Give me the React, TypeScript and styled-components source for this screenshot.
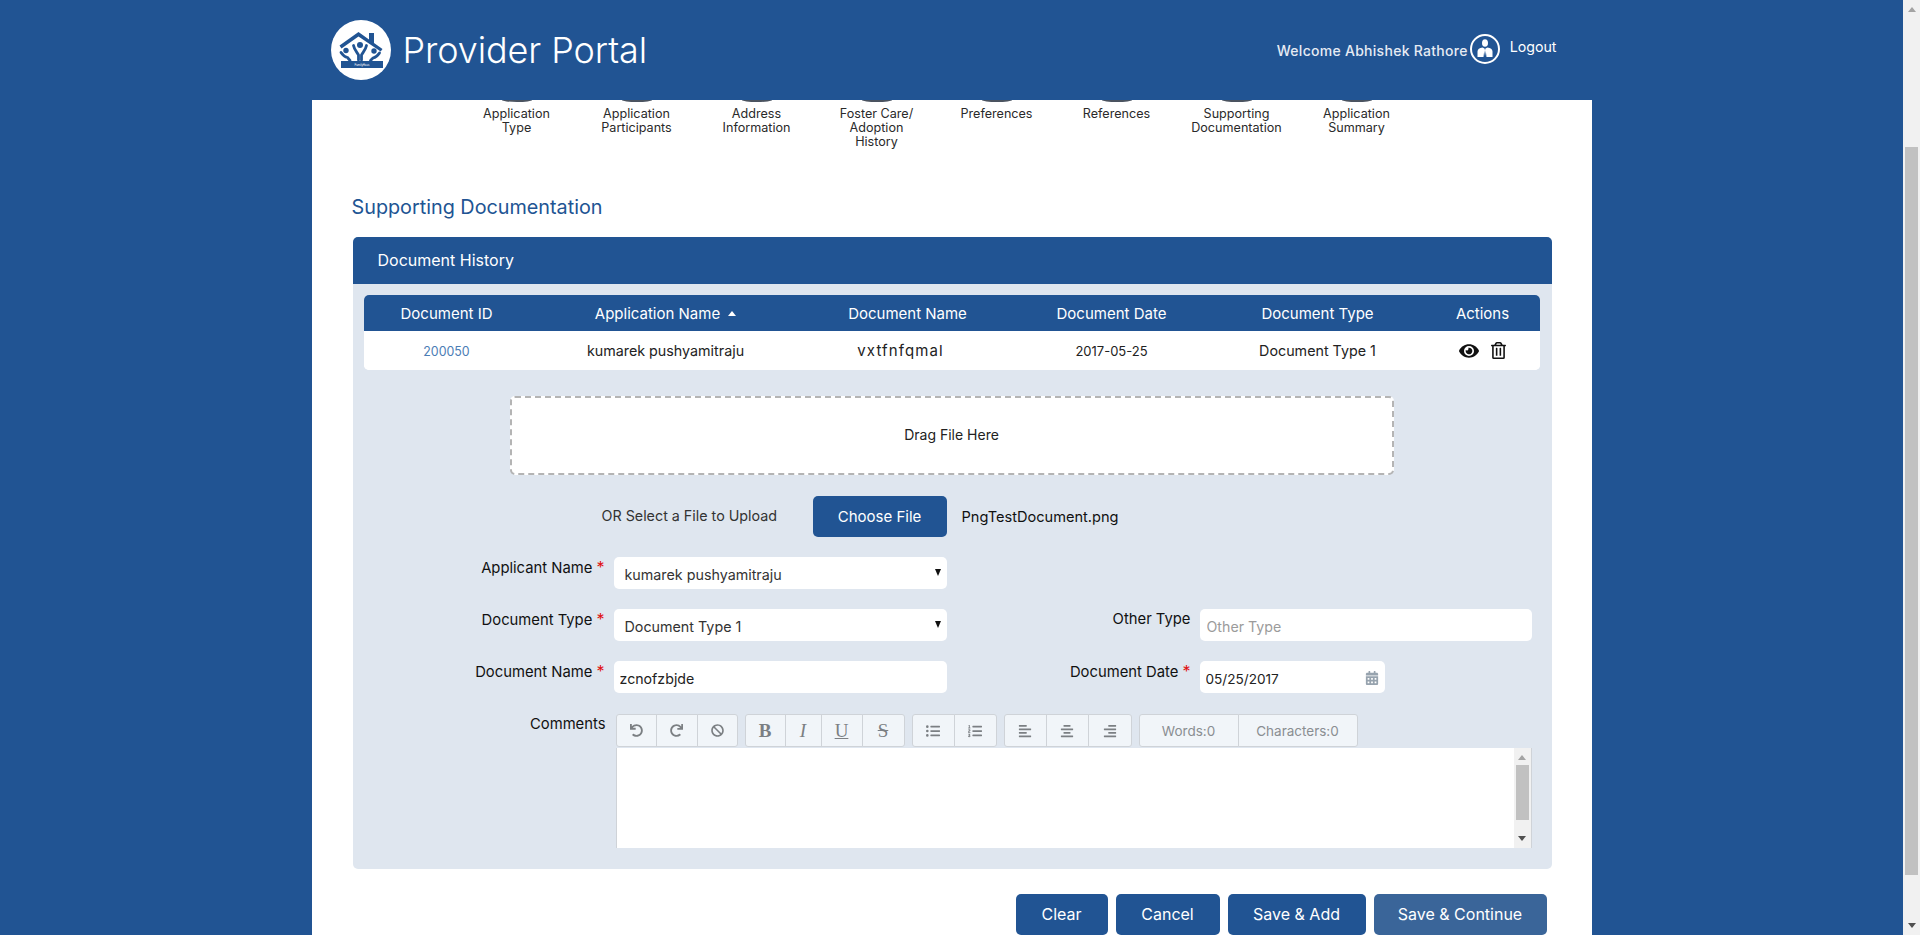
import React from "react";
import styled, { createGlobalStyle } from "styled-components";
import {
  FaAlignCenter, FaAlignLeft, FaAlignRight, FaBan, FaCalendarAlt, FaEye, FaListOl, FaListUl,
  FaRedo, FaRegTrashAlt, FaUndo,
} from "react-icons/fa";

const BLUE = "#215493";
const FONT = `Inter, "Liberation Sans", sans-serif`;

const Global = createGlobalStyle`
  html, body { margin: 0; height: 100%; overflow: hidden; background: ${BLUE}; }
  * { box-sizing: border-box; }
  body { font-family: ${FONT}; color: #222; }
`;

const Shell = styled.div`display: flex; height: 100vh;`;
const Viewport = styled.div`flex: 1; min-width: 0; display: flex; flex-direction: column; overflow: hidden;`;
const PageBar = styled.div`
  width: 17px; background: #f1f1f1; display: flex; flex-direction: column; align-items: center; flex: none;
`;
const Arrow = styled.div<{ $down?: boolean }>`
  width: 0; height: 0; flex: none;
  border-left: 4px solid transparent; border-right: 4px solid transparent;
  ${(p) => (p.$down ? "border-top: 5px solid #505050;" : "border-bottom: 5px solid #a3a3a3;")}
`;
const PageThumb = styled.div`width: 13px; height: 728px; margin-top: 135px; background: #c1c1c1; flex: none;`;
const Spacer = styled.div`flex: 1;`;
const PageArrowTop = styled(Arrow)`margin-top: 7px;`;
const PageArrowBottom = styled(Arrow)`margin-bottom: 7px;`;

const Header = styled.header`height: 100px; flex: none; background: ${BLUE}; display: flex; justify-content: center;`;
const HeaderInner = styled.div`width: 1280px; display: flex; align-items: center; padding: 0 35px 0 19px;`;
const LogoMark = styled.svg`width: 60px; height: 60px; flex: none;`;
const Title = styled.h1`
  margin: 0 0 0 12px; font-size: 36px; font-weight: 300; color: #fff; letter-spacing: -0.1px; line-height: 44px;
`;
const UserArea = styled.div`margin-left: auto; display: flex; align-items: center; color: #e6ebf3; padding-bottom: 3px;`;
const Welcome = styled.span`font-size: 14px; font-weight: 500; margin-top: 4px; letter-spacing: 0.28px;`;
const UserIcon = styled.svg`width: 32px; height: 32px; margin: 0 9px 0 1px;`;
const Logout = styled.span`font-size: 14.2px; color: #fff; margin-top: -4px;`;

const Sheet = styled.main`
  width: 1280px; flex: 1; margin: 0 auto; background: #fff; padding-left: 41px; overflow: hidden;
`;
const Steps = styled.ol`
  list-style: none; margin: 0 0 0 104px; padding: 0; display: flex; height: 95px;
`;
const Step = styled.li`
  width: 120px; display: flex; flex-direction: column; align-items: center;
  font-size: 12.6px; line-height: 14px; text-align: center; color: #2a2a2a;
`;
const StepArc = styled.span`
  width: 30px; height: 2px; margin-bottom: 5px; background: #4a5360; border-radius: 0 0 50% 50% / 0 0 100% 100%;
`;
const StepLabel = styled.span`white-space: pre-line;`;
const Heading = styled.h2`
  margin: 0 0 18px -1px; font-size: 19.8px; line-height: 24px; font-weight: 400; color: ${BLUE};
`;
const Panel = styled.section`width: 1199px; background: #dfe6ef; border-radius: 5px; height: 632px;`;
const PanelHead = styled.div`
  height: 47px; background: ${BLUE}; border-radius: 5px 5px 0 0; color: #fff;
  font-size: 16px; display: flex; align-items: center; padding: 0 0 1px 25px;
`;
const PanelBody = styled.div`padding: 11px 12px 0 11px;`;

const COLS = "166px 272px 212px 196px 216px 114px";
const Table = styled.div`width: 1176px; border-radius: 5px; overflow: hidden; background: #fff;`;
const Row = styled.div<{ $head?: boolean }>`
  display: grid; grid-template-columns: ${COLS}; align-items: center; text-align: center;
  height: ${(p) => (p.$head ? "36px" : "39px")};
  background: ${(p) => (p.$head ? BLUE : "#fff")};
  color: ${(p) => (p.$head ? "#fff" : "#222")};
  font-size: ${(p) => (p.$head ? "15px" : "14.3px")};
`;
const IdLink = styled.a`color: #4b7db5; text-decoration: none; font-size: 12.4px;`;
const TrackedCell = styled.div`font-size: 15px; letter-spacing: 1.1px; padding-right: 14px;`;
const DigitCell = styled.div`font-size: 13px;`;
const Caret = styled.span`
  display: inline-block; width: 0; height: 0; margin-left: 8px; vertical-align: 3px;
  border-left: 4.5px solid transparent; border-right: 4.5px solid transparent; border-bottom: 5px solid #fff;
`;
const Actions = styled.div`display: flex; justify-content: center; align-items: center; gap: 11px; color: #111;`;

const DropZone = styled.div`
  width: 884px; height: 79px; margin: 26px 0 21px 146px; background: #fff; border: 2px dashed #b4b4b4; border-radius: 5px;
  display: flex; align-items: center; justify-content: center; font-size: 14px; color: #222; padding-bottom: 2px;
`;
const UploadRow = styled.div`display: flex; align-items: center; height: 41px; padding-left: 238px; margin-bottom: 20px;`;
const UploadHint = styled.span`width: 211px; font-size: 14.3px; color: #333; margin-top: -2px;`;
const Button = styled.button<{ $soft?: boolean; $w?: number }>`
  height: 41px; width: ${(p) => p.$w ?? 134}px; border: 0; border-radius: 5px; font: 400 15px ${FONT};
  color: #fff; background: ${(p) => (p.$soft ? "#3a6599" : BLUE)}; padding: 0;
`;
const FooterButton = styled(Button)`font-size: 16px; padding-bottom: 1px;`;
const FileName = styled.span`margin-left: 15px; font-size: 14.6px; color: #111;`;

const FormRow = styled.div<{ $gap?: number }>`display: flex; align-items: flex-start; height: 32px; margin-bottom: ${(p) => p.$gap ?? 20}px;`;
const Label = styled.label<{ $w: number }>`
  width: ${(p) => p.$w}px; flex: none; margin-right: 9px; text-align: right; padding-top: 1px;
  font-size: 14.8px; line-height: 18px; color: #111;
`;
const Star = styled.span`color: #e01010; font-size: 16px;`;
const SelectWrap = styled.div`
  position: relative; width: 333px; height: 32px;
  &::after {
    content: ""; position: absolute; right: 6px; top: 12px; width: 0; height: 0;
    border-left: 3.5px solid transparent; border-right: 3.5px solid transparent; border-top: 7px solid #111;
  }
`;
const Select = styled.select`
  width: 100%; height: 100%; border: 0; border-radius: 5px; background: #fff; appearance: none;
  padding: 3px 0 0 11px; font: 400 14.3px ${FONT}; color: #333;
`;
const Input = styled.input<{ $w: number; $pad?: number; $size?: number }>`
  width: ${(p) => p.$w}px; height: 32px; border: 0; border-radius: 5px; background: #fff; outline: none;
  padding: 3px 6px 0 ${(p) => p.$pad ?? 6}px; font: 400 ${(p) => p.$size ?? 14.2}px ${FONT}; color: #222;
  &::placeholder { color: #9b9b9b; opacity: 1; }
`;
const DateWrap = styled.div`position: relative; width: 185px; height: 32px; color: #97a3ae;`;
const DateIcon = styled.span`position: absolute; right: 6px; top: 10px; line-height: 0;`;

const EditorRow = styled.div`display: flex; align-items: flex-start;`;
const CommentLabel = styled(Label)`margin-right: 10px;`;
const Editor = styled.div`width: 916px; margin-left: 0;`;
const Toolbar = styled.div`display: flex; gap: 7px; height: 34px;`;
const ToolGroup = styled.div`display: flex;`;
const Tool = styled.button<{ $w: number }>`
  width: ${(p) => p.$w}px; height: 33px; padding: 0; background: #f1f5f9; border: 1px solid #cfd3d8; margin-left: -1px;
  color: #7b7f83; font-size: 14px; display: flex; align-items: center; justify-content: center;
  &:first-child { margin-left: 0; border-radius: 3px 0 0 3px; }
  &:last-child { border-radius: 0 3px 3px 0; }
`;
const Glyph = styled.span<{ $i?: boolean; $u?: boolean; $s?: boolean; $b?: boolean }>`
  font: ${(p) => (p.$i ? "italic" : "normal")} ${(p) => (p.$b ? 700 : 400)} 19px "Liberation Serif", serif;
  text-decoration: ${(p) => (p.$u ? "underline" : p.$s ? "line-through" : "none")};
`;
const Counter = styled(Tool)`font: 400 13.5px ${FONT}; color: #8a8e92;`;
const EditArea = styled.div`
  height: 100px; background: #fff; border-left: 1px solid #cfd3d8; border-right: 1px solid #cfd3d8;
  display: flex; justify-content: flex-end;
`;
const EditBar = styled.div`width: 17px; background: #f1f1f1; display: flex; flex-direction: column; align-items: center;`;
const EditThumb = styled.div`width: 13px; height: 55px; background: #c1c1c1; margin-top: 5px; flex: none;`;
const EditArrowTop = styled(Arrow)`margin-top: 7px;`;
const EditArrowBottom = styled(Arrow)`margin-bottom: 7px;`;

const Footer = styled.div`width: 1194px; display: flex; justify-content: flex-end; gap: 8px; margin-top: 25px;`;

const Logo = () => (
  <LogoMark viewBox="0 0 60 60" aria-label="Logo">
    <circle cx="30" cy="30" r="30" fill="#fff" />
    <g fill={BLUE}>
      <path d="M8.500 25.500 27.500 12 38 19.500V13h5v10l8.500 6-1.800 2.500L27.500 16.500 10.500 28.500z" />
      <rect x="10" y="41" width="42" height="7" />
      <circle cx="29" cy="25" r="3" />
      <circle cx="15" cy="30.500" r="2.700" />
      <circle cx="43" cy="31" r="2.700" />
    </g>
    <g fill="none" stroke={BLUE} strokeWidth="2.800" strokeLinecap="round">
      <path d="M22.500 25.500c1 5 4 7 5 9.500v5M35.500 25.500c-1 5-4 7-5 9.500v5" />
      <path d="M10 32.500c2 3 4 4.500 6.500 5l2.500 3" />
      <path d="M48.500 33c-2 3-4 4.500-6.500 5l-2.500 2.500" />
    </g>
    <text x="31" y="45.600" textAnchor="middle" fontSize="2.800" fill="#fff" fontFamily="Liberation Sans, sans-serif">FamilyHaus</text>
  </LogoMark>
);

const Person = () => (
  <UserIcon viewBox="0 0 32 32" aria-label="User">
    <circle cx="16" cy="16" r="14" fill="none" stroke="#fff" strokeWidth="2" />
    <ellipse cx="16" cy="10" rx="3" ry="3.800" fill="#fff" />
    <path d="M8.500 24v-5.500c0-2.200 2-3.500 5-4l2 1-1 8.500zM23.500 24v-5.500c0-2.200-2-3.500-5-4l-2 1 1 8.500z" fill="#fff" />
    <path d="M16 15.500l1 1.500-1 6-1-6z" fill="#fff" />
  </UserIcon>
);

const steps = [
  "Application\nType", "Application\nParticipants", "Address\nInformation", "Foster Care/\nAdoption\nHistory",
  "Preferences", "References", "Supporting\nDocumentation", "Application\nSummary",
];

export default function App() {
  return (
    <>
      <Global />
      <Shell>
        <Viewport>
          <Header>
            <HeaderInner>
              <Logo />
              <Title>Provider Portal</Title>
              <UserArea>
                <Welcome>Welcome Abhishek Rathore</Welcome>
                <Person />
                <Logout>Logout</Logout>
              </UserArea>
            </HeaderInner>
          </Header>
          <Sheet>
            <Steps>
              {steps.map((s) => (
                <Step key={s}>
                  <StepArc />
                  <StepLabel>{s}</StepLabel>
                </Step>
              ))}
            </Steps>
            <Heading>Supporting Documentation</Heading>
            <Panel>
              <PanelHead>Document History</PanelHead>
              <PanelBody>
                <Table>
                  <Row $head>
                    <div>Document ID</div>
                    <div>Application Name<Caret /></div>
                    <div>Document Name</div>
                    <div>Document Date</div>
                    <div>Document Type</div>
                    <div>Actions</div>
                  </Row>
                  <Row>
                    <div><IdLink href="#">200050</IdLink></div>
                    <div>kumarek pushyamitraju</div>
                    <TrackedCell>vxtfnfqmal</TrackedCell>
                    <DigitCell>2017-05-25</DigitCell>
                    <div>Document Type 1</div>
                    <Actions><FaEye size={20} /><FaRegTrashAlt size={17} /></Actions>
                  </Row>
                </Table>
                <DropZone>Drag File Here</DropZone>
                <UploadRow>
                  <UploadHint>OR Select a File to Upload</UploadHint>
                  <Button>Choose File</Button>
                  <FileName>PngTestDocument.png</FileName>
                </UploadRow>
                <FormRow>
                  <Label $w={241}>Applicant Name <Star>*</Star></Label>
                  <SelectWrap>
                    <Select defaultValue="a"><option value="a">kumarek pushyamitraju</option></Select>
                  </SelectWrap>
                </FormRow>
                <FormRow>
                  <Label $w={241}>Document Type <Star>*</Star></Label>
                  <SelectWrap>
                    <Select defaultValue="a"><option value="a">Document Type 1</option></Select>
                  </SelectWrap>
                  <Label $w={244}>Other Type</Label>
                  <Input $w={332} $pad={7} placeholder="Other Type" readOnly />
                </FormRow>
                <FormRow $gap={21}>
                  <Label $w={241}>Document Name <Star>*</Star></Label>
                  <Input $w={333} value="zcnofzbjde" readOnly />
                  <Label $w={244}>Document Date <Star>*</Star></Label>
                  <DateWrap>
                    <Input $w={185} $size={13.6} value="05/25/2017" readOnly />
                    <DateIcon><FaCalendarAlt size={14} /></DateIcon>
                  </DateWrap>
                </FormRow>
                <EditorRow>
                  <CommentLabel $w={242}>Comments</CommentLabel>
                  <Editor>
                    <Toolbar>
                      <ToolGroup>
                        <Tool $w={41}><FaUndo size={13} /></Tool>
                        <Tool $w={42}><FaRedo size={13} /></Tool>
                        <Tool $w={41}><FaBan size={13} /></Tool>
                      </ToolGroup>
                      <ToolGroup>
                        <Tool $w={41}><Glyph $b>B</Glyph></Tool>
                        <Tool $w={37}><Glyph $i>I</Glyph></Tool>
                        <Tool $w={42}><Glyph $u>U</Glyph></Tool>
                        <Tool $w={43}><Glyph $s>S</Glyph></Tool>
                      </ToolGroup>
                      <ToolGroup>
                        <Tool $w={43}><FaListUl size={14} /></Tool>
                        <Tool $w={43}><FaListOl size={14} /></Tool>
                      </ToolGroup>
                      <ToolGroup>
                        <Tool $w={43}><FaAlignLeft size={14} /></Tool>
                        <Tool $w={43}><FaAlignCenter size={14} /></Tool>
                        <Tool $w={44}><FaAlignRight size={14} /></Tool>
                      </ToolGroup>
                      <ToolGroup>
                        <Counter $w={100}>Words:0</Counter>
                        <Counter $w={120}>Characters:0</Counter>
                      </ToolGroup>
                    </Toolbar>
                    <EditArea>
                      <EditBar>
                        <EditArrowTop />
                        <EditThumb />
                        <Spacer />
                        <EditArrowBottom $down />
                      </EditBar>
                    </EditArea>
                  </Editor>
                </EditorRow>
              </PanelBody>
            </Panel>
            <Footer>
              <FooterButton $w={92}>Clear</FooterButton>
              <FooterButton $w={104}>Cancel</FooterButton>
              <FooterButton $w={138}>Save &amp; Add</FooterButton>
              <FooterButton $w={173} $soft>Save &amp; Continue</FooterButton>
            </Footer>
          </Sheet>
        </Viewport>
        <PageBar>
          <PageArrowTop />
          <PageThumb />
          <Spacer />
          <PageArrowBottom $down />
        </PageBar>
      </Shell>
    </>
  );
}
